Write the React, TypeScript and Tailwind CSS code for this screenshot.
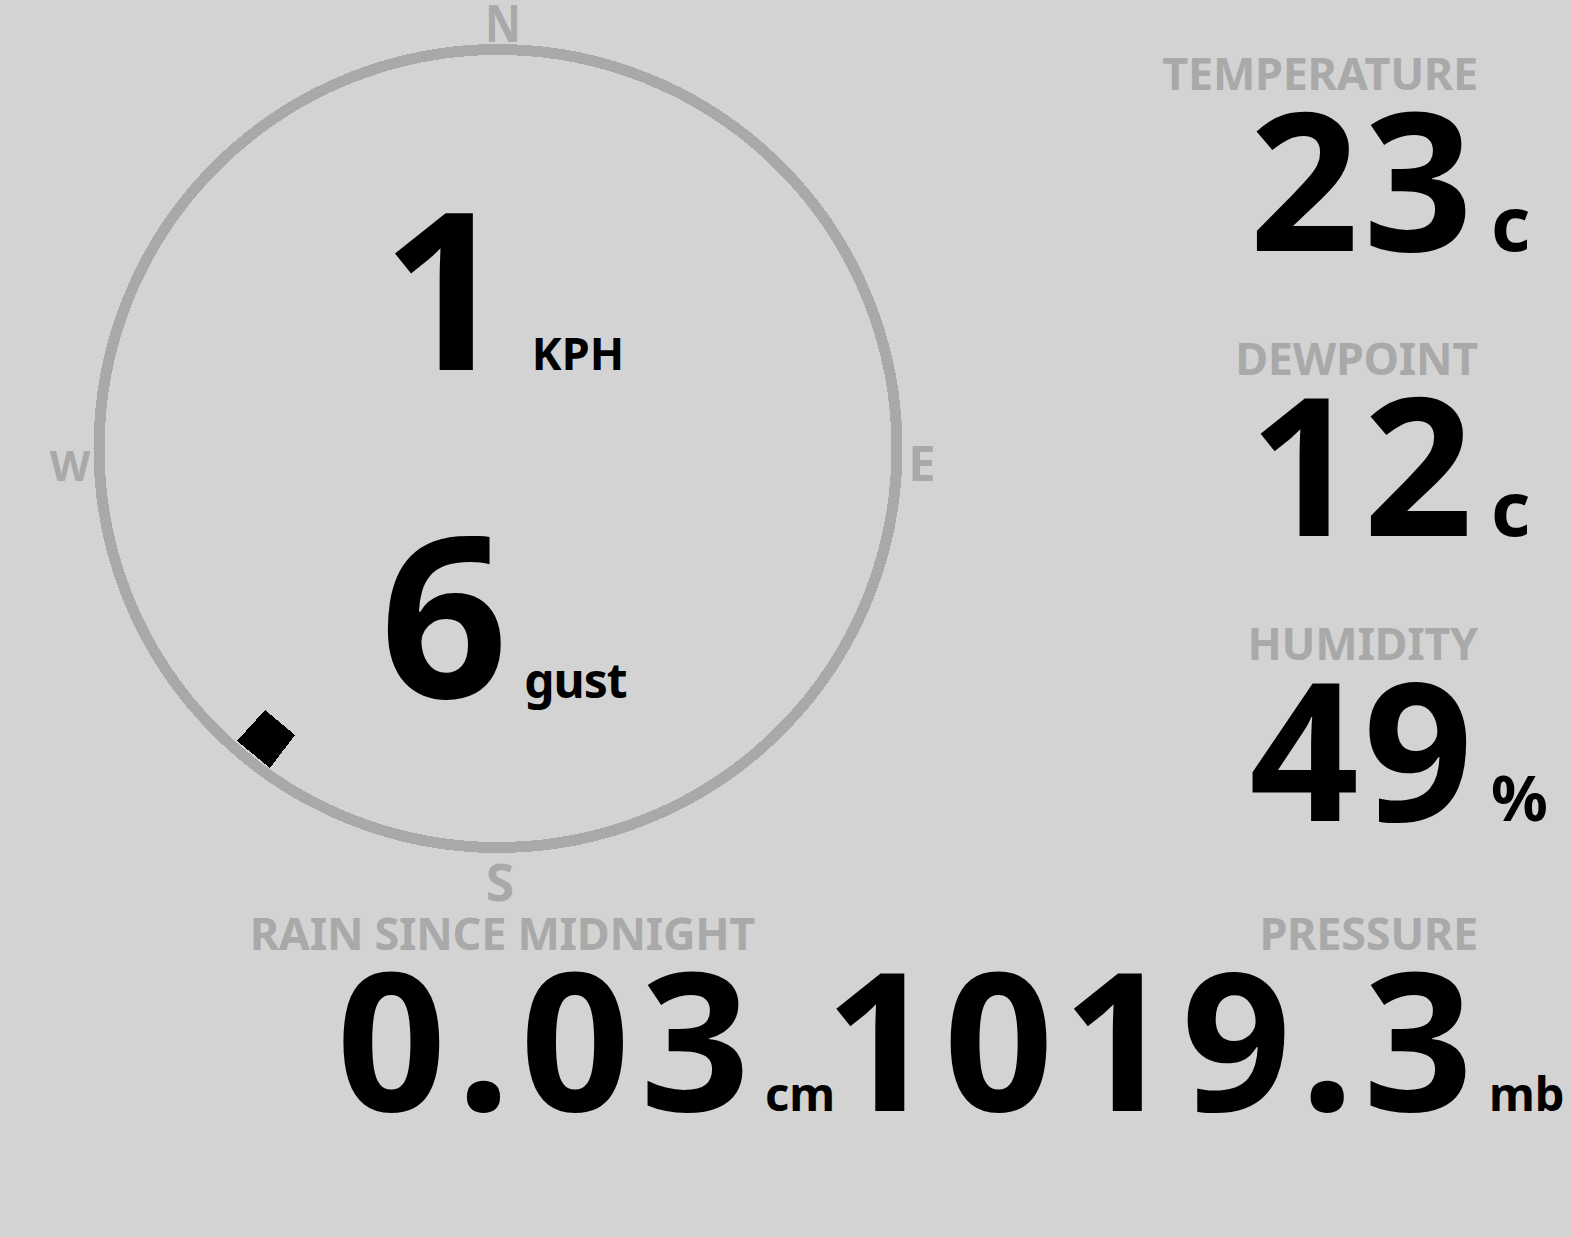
import React from "react";

type Reading = {
  label: string;
  value: string;
  unit: string;
  unitClass: string;
};

const readings: Reading[] = [
  { label: "TEMPERATURE", value: "23", unit: "c", unitClass: "text-[76px] pl-[16px]" },
  { label: "DEWPOINT", value: "12", unit: "c", unitClass: "text-[76px] pl-[16px]" },
  { label: "HUMIDITY", value: "49", unit: "%", unitClass: "text-[63px] pl-[16px]" },
];

function Compass() {
  return (
    <div className="relative w-[1000px] h-[905px] shrink-0">
      <svg className="absolute inset-0" width="1000" height="905" viewBox="0 0 1000 905">
        <circle cx="498" cy="448.5" r="399" fill="none" stroke="#a9a9a9" strokeWidth="11" shapeRendering="crispEdges" />
        <polygon points="265,710 295,735 270,768 237,741" fill="#000" shapeRendering="crispEdges" />
      </svg>

      <span className="absolute left-[503px] top-[22px] -translate-x-1/2 -translate-y-1/2 text-[52px] leading-[0.8] text-[#a9a9a9] scale-x-[0.85]">N</span>
      <span className="absolute left-[922px] top-[462px] -translate-x-1/2 -translate-y-1/2 text-[49px] leading-none text-[#a9a9a9]">E</span>
      <span className="absolute left-[500px] top-[881px] -translate-x-1/2 -translate-y-1/2 text-[52px] leading-none text-[#a9a9a9]">S</span>
      <span className="absolute left-[70px] top-[465px] -translate-x-1/2 -translate-y-1/2 text-[42px] leading-none text-[#a9a9a9]">W</span>

      <div className="absolute left-[382px] top-[175px] flex items-baseline">
        <span className="text-[220px] leading-none">1</span>
        <span className="text-[45px] leading-none ml-[24px]">KPH</span>
      </div>
      <div className="absolute left-[380px] top-[500px] flex items-baseline">
        <span className="text-[224px] leading-none">6</span>
        <span className="text-[48px] leading-none tracking-[-1px] ml-[16px]">gust</span>
      </div>
    </div>
  );
}

function Block({
  label,
  value,
  unit,
  unitClass,
  cols,
  valueClass,
}: Reading & { cols: string; valueClass: string }) {
  return (
    <div className={`grid ${cols} items-baseline`}>
      <div className="flex justify-end text-[45px] leading-none tracking-[-0.3px] text-[#a9a9a9] mr-[-3px] whitespace-nowrap">
        {label}
      </div>
      <div />
      <div className={`flex justify-end text-[192px] leading-[0.8] mt-[5px] whitespace-nowrap ${valueClass}`}>
        <span>{value}</span>
      </div>
      <div className={`leading-none ${unitClass}`}>{unit}</div>
    </div>
  );
}

export default function App() {
  return (
    <div className="w-[1571px] h-[1237px] bg-[#d3d3d3] text-black font-bold font-['Noto_Sans',sans-serif] flex flex-col overflow-hidden">
      <div className="flex h-[905px]">
        <Compass />
        <div className="flex-1 flex flex-col gap-[75px] pt-[50px]">
          {readings.map((r) => (
            <Block key={r.label} {...r} cols="grid-cols-[minmax(0,1fr)_96px]" valueClass="tracking-[4px] mr-[-2px]" />
          ))}
        </div>
      </div>
      <div className="flex pt-[5px]">
        <div className="w-[830px] shrink-0">
          <Block
            label="RAIN SINCE MIDNIGHT"
            value="0.03"
            unit="cm"
            unitClass="text-[47px] pl-[13px]"
            cols="grid-cols-[minmax(0,1fr)_78px]"
            valueClass="tracking-[10px] mr-[-8px]"
          />
        </div>
        <div className="flex-1 min-w-0">
          <Block
            label="PRESSURE"
            value="1019.3"
            unit="mb"
            unitClass="text-[47px] pl-[14px]"
            cols="grid-cols-[minmax(0,1fr)_96px]"
            valueClass="tracking-[9px] mr-[-7px]"
          />
        </div>
      </div>
    </div>
  );
}
